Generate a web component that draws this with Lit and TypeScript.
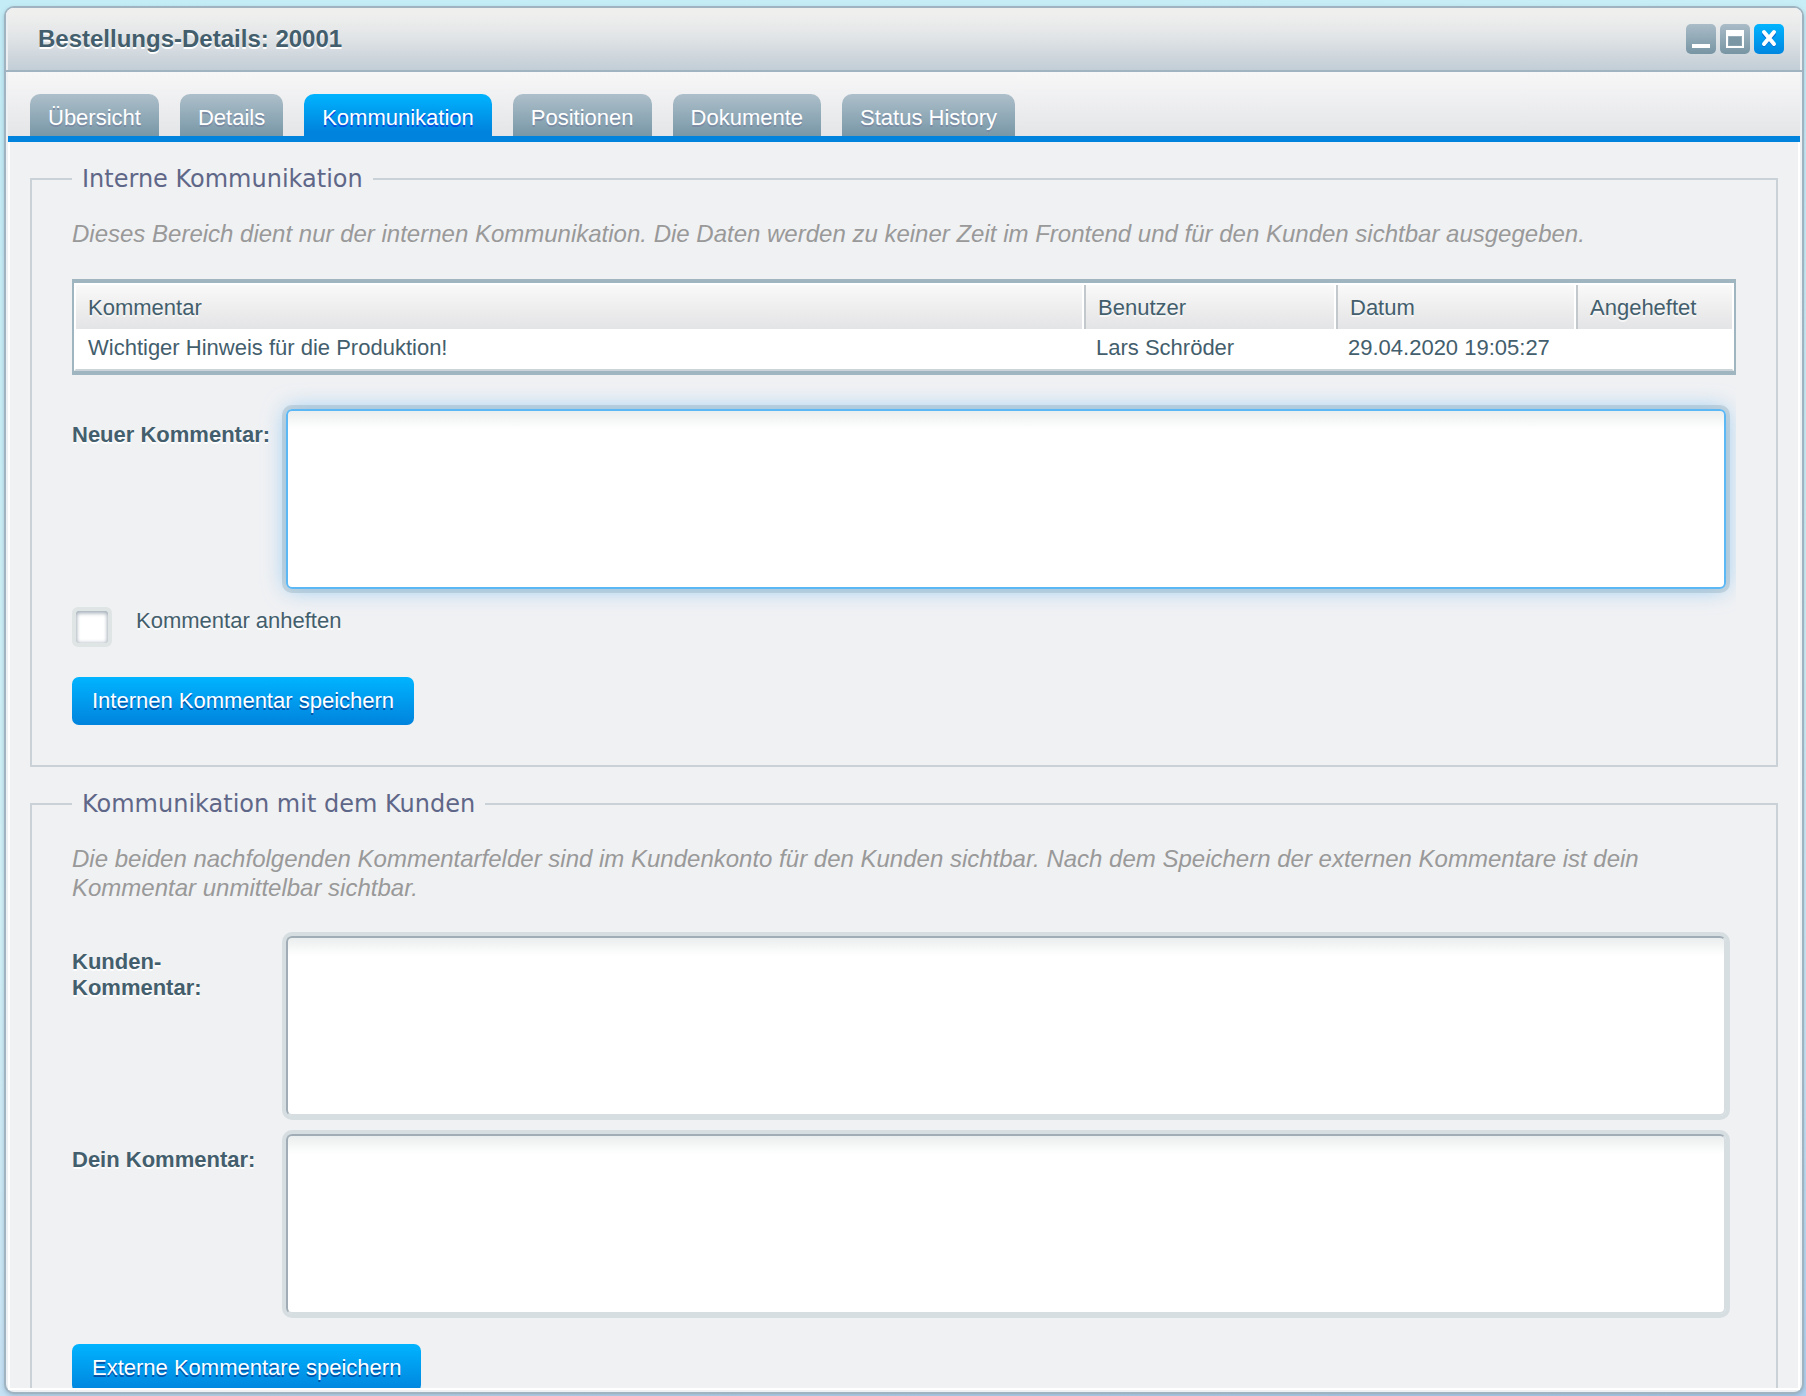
import { LitElement, html, css } from "lit";
import { customElement, property, state } from "lit/decorators.js";
import { classMap } from "lit/directives/class-map.js";

interface CommentEntry {
  text: string;
  user: string;
  date: string;
  pinned: string;
}

@customElement("window-header")
class WindowHeader extends LitElement {
  @property() heading = "";

  static styles = css`
    :host {
      display: block;
    }
    .header {
      display: flex;
      align-items: center;
      gap: 4px;
      height: 62px;
      padding: 0 18px 0 32px;
      border-bottom: 2px solid #9fb4c0;
      border-radius: 8px 8px 0 0;
      background: linear-gradient(#efefee 10%, #e2e5e7 45%, #c2cdd6);
      box-shadow: inset 2px 0 #eceff1, inset -2px 0 #eceff1;
    }
    .title {
      flex: 1;
      margin: 0;
      font-size: 24px;
      line-height: 28px;
      color: #435e6c;
      text-shadow: 0 2px 0 #fff;
    }
    .tool {
      width: 30px;
      height: 30px;
      padding: 0;
      border: 0;
      border-radius: 5px;
      background: linear-gradient(#a9bcc7, #7895a4);
    }
    .tool.close {
      background: linear-gradient(#00b4ff, #0086e0);
    }
    .glyph {
      display: block;
      width: 30px;
      height: 30px;
    }
  `;

  render() {
    return html`
      <header class="header">
        <h1 class="title">${this.heading}</h1>
        <button class="tool" type="button" aria-label="Minimieren">
          <svg class="glyph" viewBox="0 0 30 30">
            <rect x="6" y="20" width="18" height="4" fill="#fff" />
          </svg>
        </button>
        <button class="tool" type="button" aria-label="Maximieren">
          <svg class="glyph" viewBox="0 0 30 30">
            <path fill="#fff" fill-rule="evenodd" d="M6 6H24V24H6Z M8 12V22H22V12Z" />
            <rect x="9" y="13" width="12" height="8" fill="#7b96a5" />
          </svg>
        </button>
        <button class="tool close" type="button" aria-label="Schließen">
          <svg class="glyph" viewBox="0 0 30 30">
            <path d="M10 10L20 21M20 10L10 21" stroke="#0a6fd4" stroke-width="4" stroke-linecap="round" />
            <path d="M10 8L20 20M20 8L10 20" stroke="#fff" stroke-width="4" stroke-linecap="round" />
          </svg>
        </button>
      </header>
    `;
  }
}

@customElement("comment-table")
class CommentTable extends LitElement {
  @property({ attribute: false }) entries: CommentEntry[] = [];

  static styles = css`
    :host {
      display: block;
    }
    .frame {
      border: 2px solid #9fb5c0;
      border-width: 4px 2px;
    }
    .grid {
      width: 100%;
      table-layout: fixed;
      border-collapse: separate;
      border-spacing: 0;
      border: 2px solid #fff;
      border-bottom-color: #cbd4d9;
      background: #fff;
      font-size: 22px;
      line-height: 26px;
      color: #435e6c;
    }
    .head {
      padding: 10px 12px 8px;
      text-align: left;
      font-weight: normal;
      background: linear-gradient(#f9f9f9, #ececed 60%, #e3e4e6);
      background-clip: padding-box;
      text-shadow: 0 2px 0 rgba(255, 255, 255, 0.7);
      border-left: 2px solid #c3c8cc;
      border-right: 2px solid #fff;
    }
    .head:first-child {
      border-left: 0;
    }
    .head:last-child {
      border-right: 0;
    }
    .cell {
      padding: 6px 12px 8px;
    }
    .user {
      width: 224px;
    }
    .date {
      width: 212px;
    }
    .pinned {
      width: 130px;
    }
  `;

  render() {
    return html`
      <div class="frame">
        <table class="grid">
          <thead>
            <tr>
              <th class="head">Kommentar</th>
              <th class="head user">Benutzer</th>
              <th class="head date">Datum</th>
              <th class="head pinned">Angeheftet</th>
            </tr>
          </thead>
          <tbody>
            ${this.entries.map(
              (e) => html`<tr>
                <td class="cell">${e.text}</td>
                <td class="cell">${e.user}</td>
                <td class="cell">${e.date}</td>
                <td class="cell">${e.pinned}</td>
              </tr>`
            )}
          </tbody>
        </table>
      </div>
    `;
  }
}

@customElement("app-root")
class AppRoot extends LitElement {
  @state() private activeTab = "Kommunikation";
  @state() private activeField = "neu";

  private tabs = ["Übersicht", "Details", "Kommunikation", "Positionen", "Dokumente", "Status History"];

  private entries: CommentEntry[] = [
    {
      text: "Wichtiger Hinweis für die Produktion!",
      user: "Lars Schröder",
      date: "29.04.2020 19:05:27",
      pinned: "",
    },
  ];

  static styles = css`
    :host {
      display: block;
      font-family: Arial, "Liberation Sans", sans-serif;
      font-size: 22px;
      line-height: 26px;
      color: #435e6c;
    }
    .desktop {
      box-sizing: border-box;
      height: 100vh;
      padding: 6px 2px 2px 4px;
      background: linear-gradient(172deg, #c3ecf6, #d3f2f7 55%, #cbe6f5 80%, #b0d0ef);
    }
    .window {
      box-sizing: border-box;
      display: flex;
      flex-direction: column;
      height: 100%;
      padding-bottom: 2px;
      border: 2px solid #9fb4c0;
      border-radius: 10px;
      background: #edf1f4;
      box-shadow: 0 2px 4px rgba(120, 150, 175, 0.5);
    }
    .tabbar {
      display: flex;
      align-items: flex-end;
      gap: 21px;
      margin: 0 2px;
      padding: 22px 22px 0;
      border-bottom: 6px solid #0083dd;
      background: linear-gradient(#f7f7f8, #e4e5e7);
    }
    .tab {
      height: 42px;
      padding: 6px 18px 0;
      border: 0;
      border-radius: 10px 10px 0 0;
      font: inherit;
      color: #fff;
      background: linear-gradient(#adbfca, #7897a7);
      text-shadow: 0 2px 0 #7a8ba3;
    }
    .tab.active {
      background: linear-gradient(#00b4ff, #0083dd 90%);
      text-shadow: 0 2px 0 #0a4be0;
    }
    .content {
      flex: 1;
      min-height: 0;
      margin: 0 2px;
      padding: 23px 20px;
      display: flex;
      flex-direction: column;
      gap: 23px;
      overflow-y: auto;
      scrollbar-width: none;
      border: 2px solid #fff;
      border-top: 0;
      background: #f0f1f3;
    }
    .group {
      flex: none;
      min-width: 0;
      margin: 0;
      padding: 26px 40px 40px;
      border: 2px solid #cad2d7;
    }
    .legend {
      padding: 0 10px;
      font-family: Verdana, "DejaVu Sans", sans-serif;
      font-size: 24px;
      line-height: 28px;
      color: #5f6788;
    }
    .hint {
      margin: 0;
      font-size: 24px;
      line-height: 29px;
      font-style: italic;
      color: #999;
    }
    .comments {
      margin-top: 31px;
    }
    .form {
      display: flex;
      flex-direction: column;
      gap: 18px;
      margin-top: 34px;
      overflow-x: clip;
    }
    .row {
      display: flex;
      padding-right: 10px;
    }
    .label {
      flex: none;
      box-sizing: border-box;
      width: 214px;
      padding: 13px 10px 0 0;
      font-weight: bold;
      text-shadow: 0 2px 0 #fff;
    }
    .input {
      flex: 1;
      min-width: 0;
      box-sizing: border-box;
      height: 180px;
      padding: 8px;
      border: 2px solid;
      border-color: #a0adb7 #d7dee2 #d7dee2 #a0adb7;
      border-radius: 6px;
      outline: none;
      resize: none;
      font: inherit;
      color: inherit;
      background: linear-gradient(#ebeeee, #fff 18px);
      background-clip: padding-box;
      box-shadow: 0 0 0 4px #d7dee2;
    }
    .input.active {
      border-color: #5cb8f5;
      box-shadow: 0 0 0 4px rgba(140, 165, 180, 0.35), 0 0 22px rgba(80, 175, 245, 0.6);
    }
    .check-row {
      display: flex;
      gap: 24px;
      text-shadow: 0 2px 0 #fff;
    }
    .check-label {
      padding-top: 1px;
    }
    .check {
      appearance: none;
      box-sizing: border-box;
      width: 40px;
      height: 40px;
      margin: 0;
      border: 4px solid #dfe4e5;
      border-radius: 6px;
      background: #fff;
      box-shadow: inset 0 2px 4px #a5b0ba, inset 0 0 4px #bcc4ca;
    }
    .save {
      display: block;
      height: 48px;
      margin-top: 30px;
      padding: 0 20px;
      border: 0;
      border-radius: 7px;
      font: inherit;
      color: #fff;
      background: linear-gradient(#00b4ff, #0083dd);
      text-shadow: 0 2px 0 #0551a8;
    }
  `;

  private field(id: string, label: string) {
    return html`
      <div class="row">
        <label class="label" for=${id}>${label}</label>
        <textarea
          class=${classMap({ input: true, active: this.activeField === id })}
          id=${id}
          @focus=${() => (this.activeField = id)}
        ></textarea>
      </div>
    `;
  }

  render() {
    return html`
      <div class="desktop">
        <section class="window">
          <window-header heading="Bestellungs-Details: 20001"></window-header>
          <nav class="tabbar">
            ${this.tabs.map(
              (t) => html`<button
                type="button"
                class=${classMap({ tab: true, active: t === this.activeTab })}
                @click=${() => (this.activeTab = t)}
              >${t}</button>`
            )}
          </nav>
          <main class="content">
            <fieldset class="group">
              <legend class="legend">Interne Kommunikation</legend>
              <p class="hint">
                Dieses Bereich dient nur der internen Kommunikation. Die Daten werden zu keiner Zeit im Frontend und für
                den Kunden sichtbar ausgegeben.
              </p>
              <comment-table class="comments" .entries=${this.entries}></comment-table>
              <div class="form">
                ${this.field("neu", "Neuer Kommentar:")}
                <div class="check-row">
                  <input class="check" type="checkbox" id="anheften" />
                  <label class="check-label" for="anheften">Kommentar anheften</label>
                </div>
              </div>
              <button class="save" type="button">Internen Kommentar speichern</button>
            </fieldset>
            <fieldset class="group">
              <legend class="legend">Kommunikation mit dem Kunden</legend>
              <p class="hint">
                Die beiden nachfolgenden Kommentarfelder sind im Kundenkonto für den Kunden sichtbar. Nach dem Speichern
                der externen Kommentare ist dein Kommentar unmittelbar sichtbar.
              </p>
              <div class="form">
                ${this.field("kunde", "Kunden-Kommentar:")} ${this.field("dein", "Dein Kommentar:")}
              </div>
              <button class="save" type="button">Externe Kommentare speichern</button>
            </fieldset>
          </main>
        </section>
      </div>
    `;
  }
}
